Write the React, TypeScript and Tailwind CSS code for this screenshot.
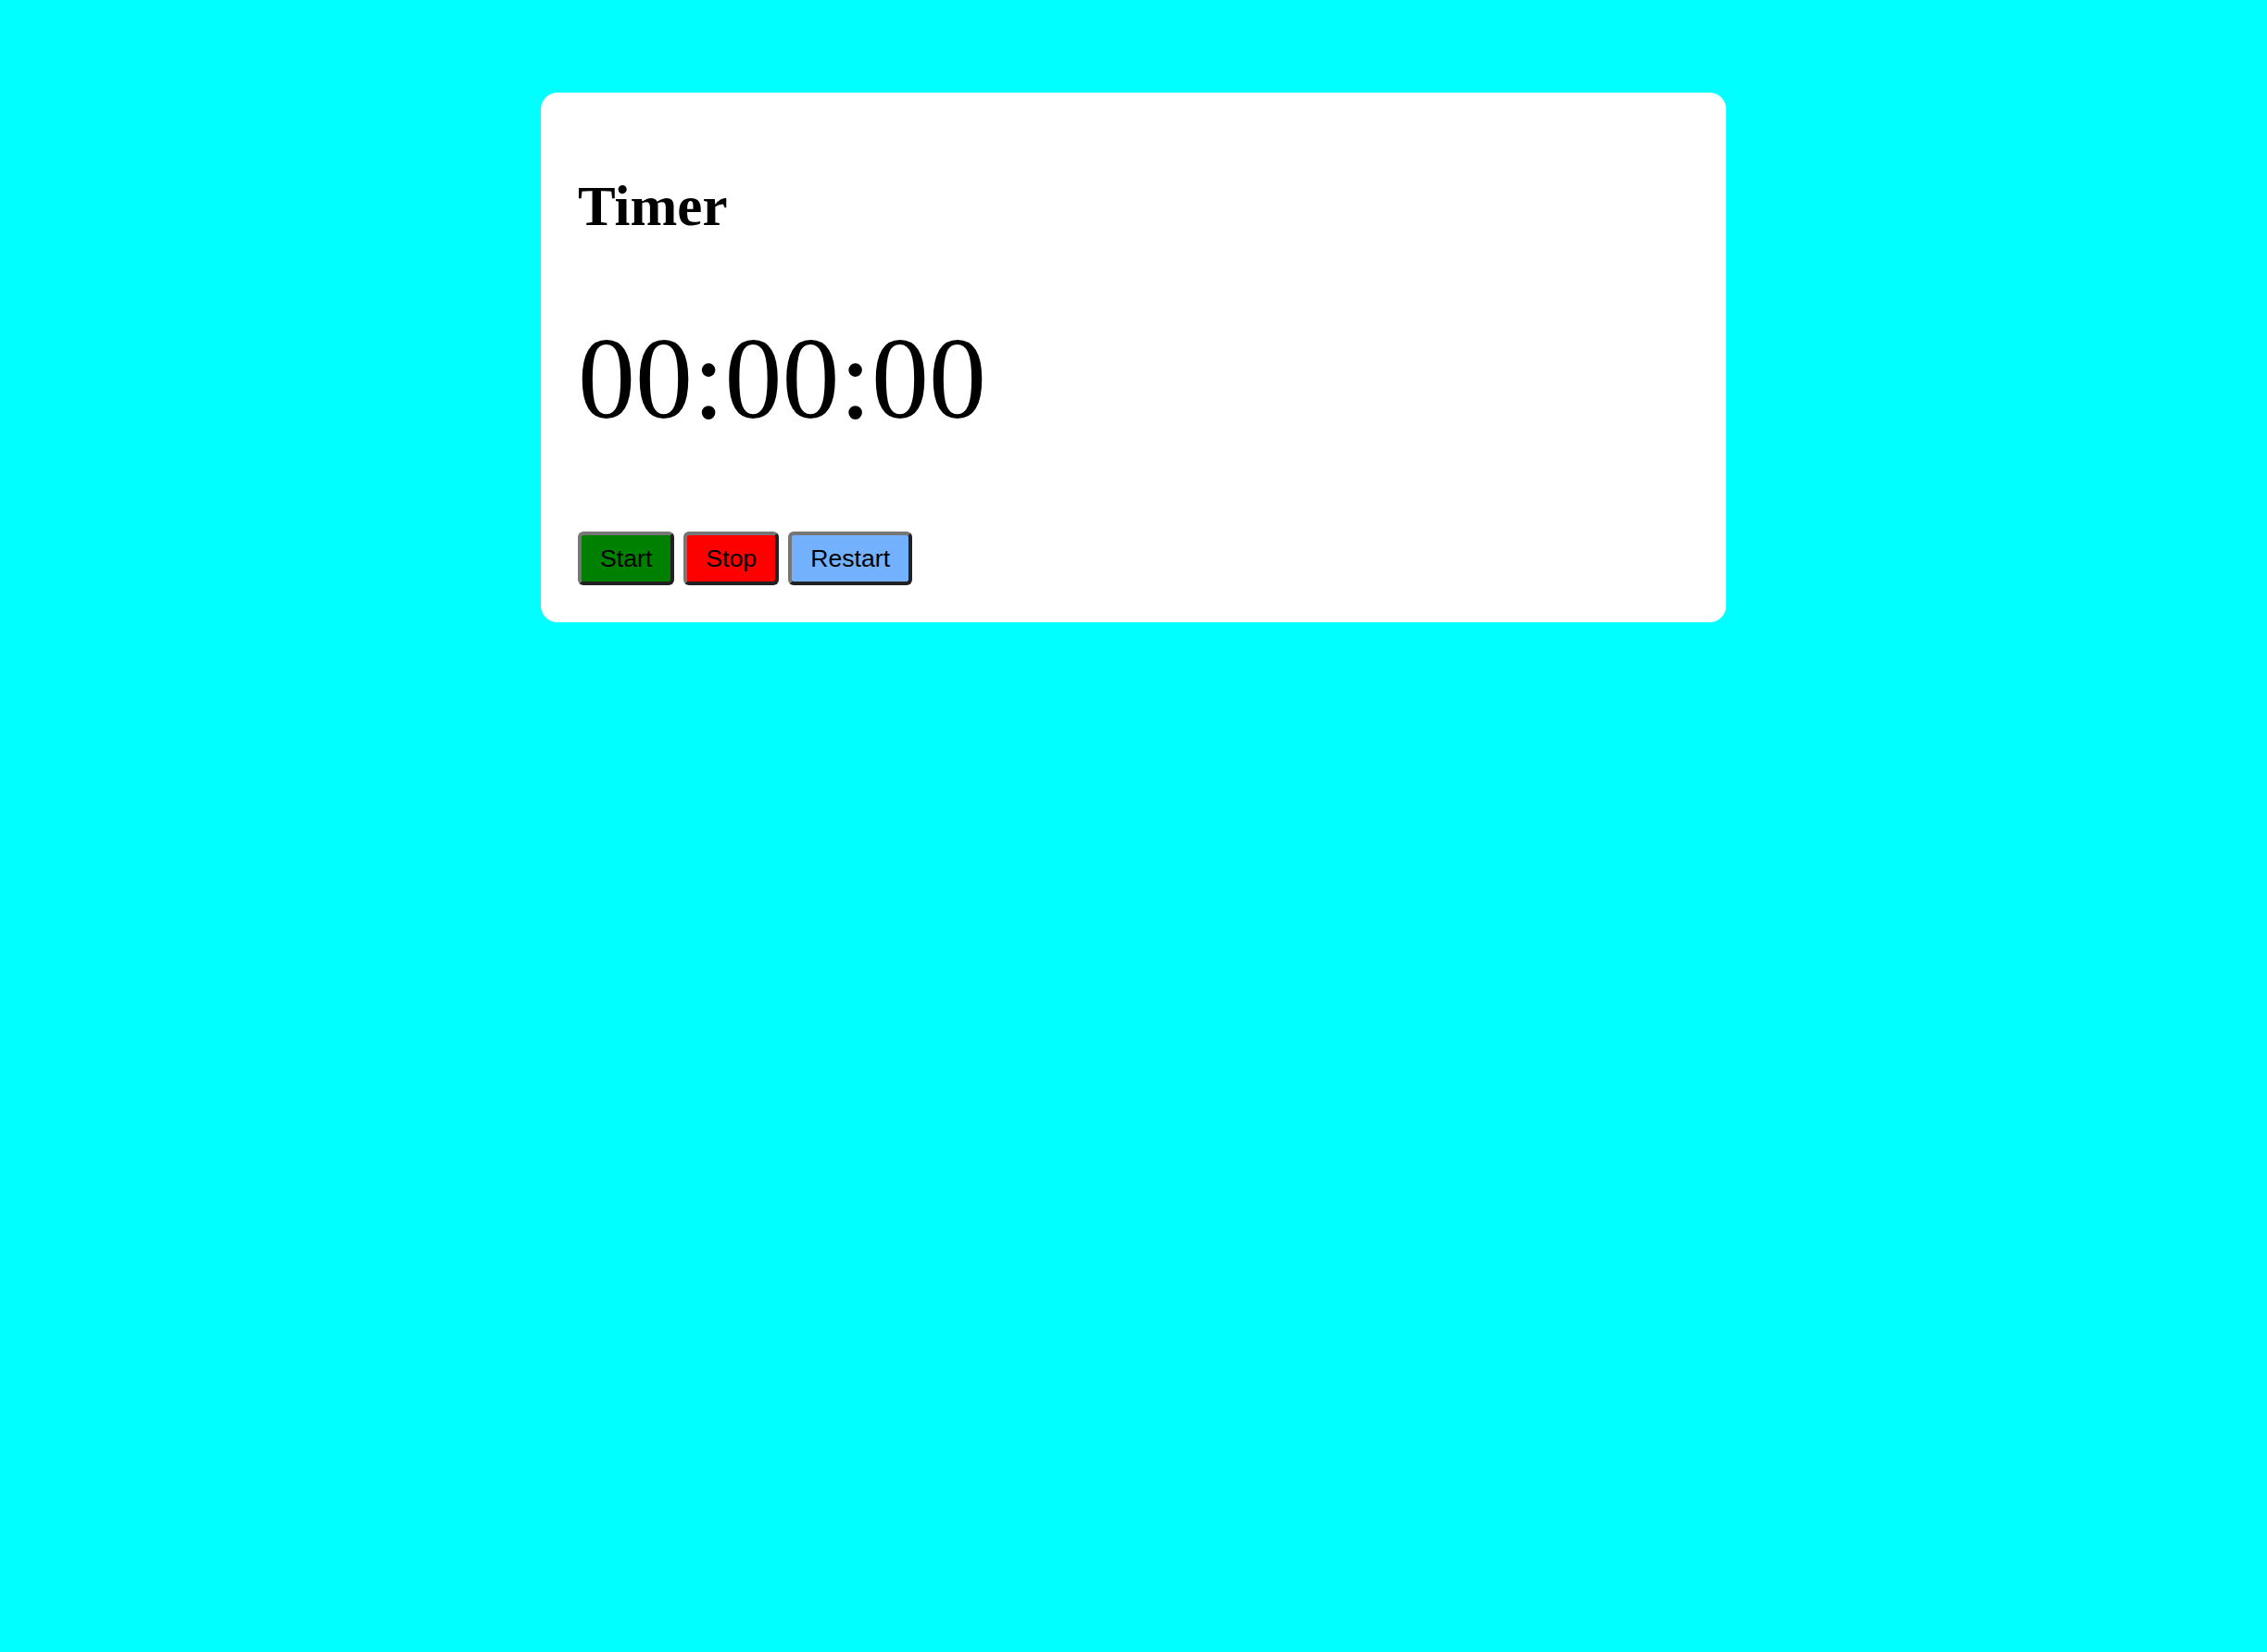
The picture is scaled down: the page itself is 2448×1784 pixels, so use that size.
import React from "react";

export default function App() {
  const btn =
    "border-[4px] [border-style:solid] border-t-[#767676] border-l-[#767676] border-b-[#212121] border-r-[#212121] rounded-[6px] px-[20px] py-[9px] text-[26.67px] leading-[32px] text-black";
  return (
    <div className="min-h-screen w-full bg-[#00ffff] pt-[100px]">
      <div className="mx-auto w-[1280px] rounded-[18px] bg-white px-[40px] pt-[40px] pb-[40px]">
        <h1
          className="mt-[52px] text-[61px] leading-[61px] font-bold text-black"
          style={{ fontFamily: '"Liberation Serif", "Times New Roman", serif' }}
        >
          Timer
        </h1>
        <div
          className="mt-[95px] text-[124px] leading-[124px] text-black"
          style={{ fontFamily: '"Liberation Serif", "Times New Roman", serif' }}
        >
          00:00:00
        </div>
        <div
          className="mt-[102px] flex gap-[10px]"
          style={{ fontFamily: '"Liberation Sans", Arial, sans-serif' }}
        >
          <button className={`${btn} bg-[#008000]`}>Start</button>
          <button className={`${btn} bg-[#ff0000]`}>Stop</button>
          <button className={`${btn} bg-[#73b1ff]`}>Restart</button>
        </div>
      </div>
    </div>
  );
}
